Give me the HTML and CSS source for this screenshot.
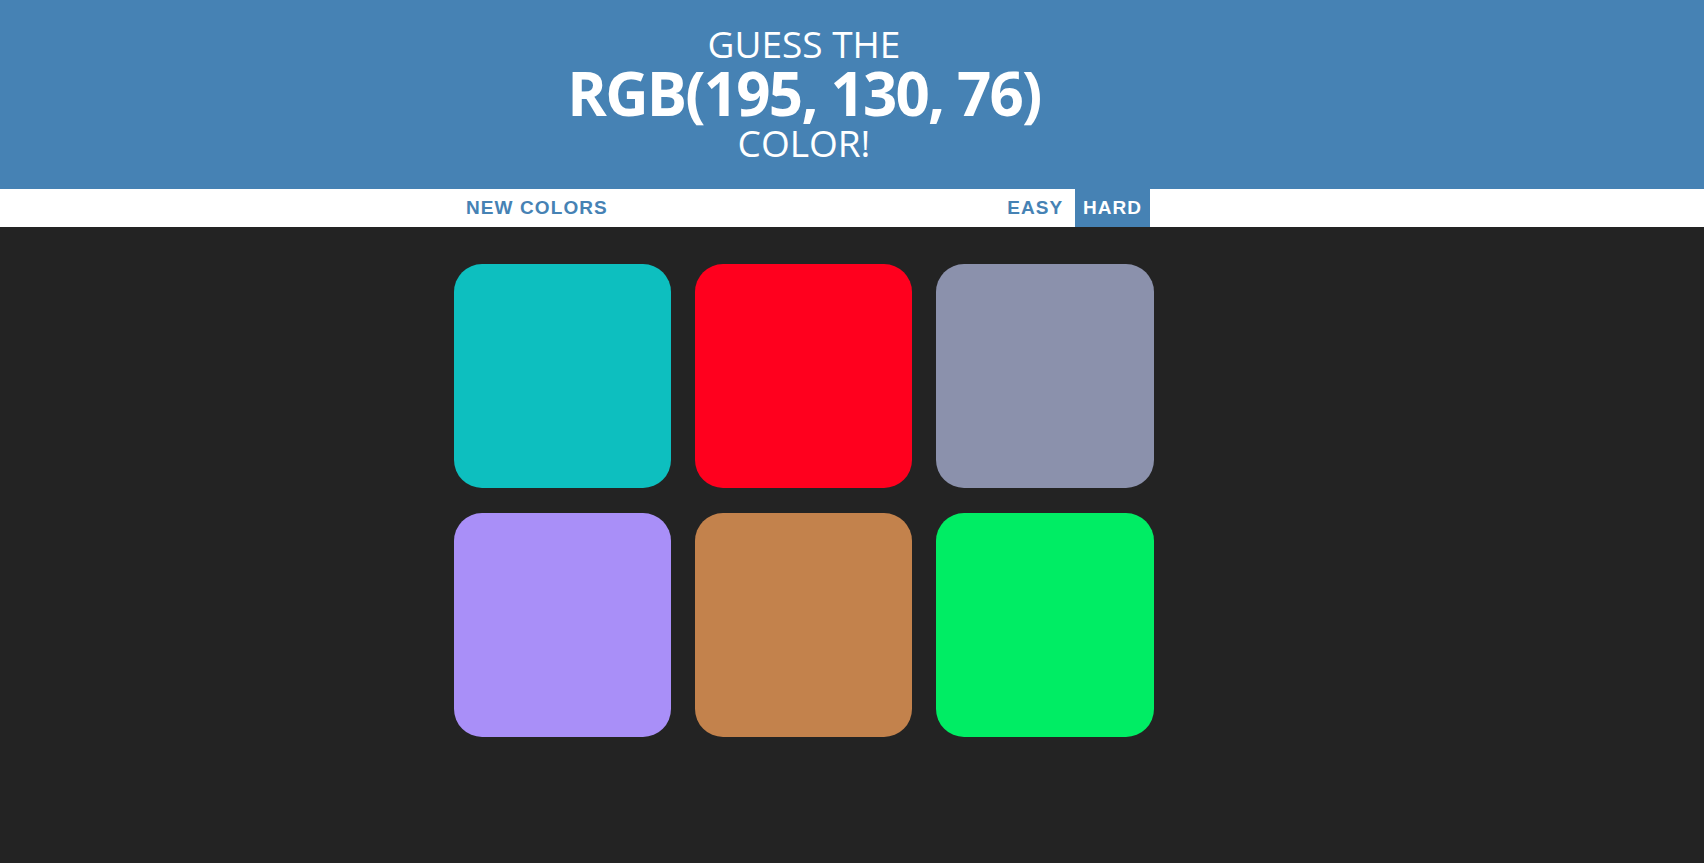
FILE: index.html
```html
<!DOCTYPE html>
<html lang="en">
<head>
<meta charset="utf-8">
<title>Color Game</title>
<link rel="stylesheet" href="styles.css">
</head>
<body>
  <header class="banner">
    <div class="inner">
      <h1 class="title">
        <span class="line line-small">GUESS THE</span>
        <span class="line line-big">RGB(195, 130, 76)</span>
        <span class="line line-last">COLOR!</span>
      </h1>
    </div>
  </header>
  <nav class="stripe">
    <div class="inner">
      <div class="stripe-bar">
        <button class="btn">New Colors</button>
        <span class="message"></span>
        <div class="modes">
          <button class="btn">Easy</button>
          <button class="btn selected">Hard</button>
        </div>
      </div>
    </div>
  </nav>
  <main class="inner">
    <div class="grid">
      <div class="square sq-teal"></div>
      <div class="square sq-red"></div>
      <div class="square sq-grey"></div>
      <div class="square sq-purple"></div>
      <div class="square sq-brown"></div>
      <div class="square sq-green"></div>
    </div>
  </main>
</body>
</html>
```
FILE: styles.css
```css
html, body {
  margin: 0;
  padding: 0;
}
body {
  background: #232323;
  font-family: "Open Sans", "Liberation Sans", sans-serif;
  min-height: 863px;
}
.inner {
  width: 1608px;
}
.banner {
  background: #4682b4;
  color: #ffffff;
  height: 189px;
}
.title {
  margin: 0;
  padding-top: 22px;
  text-align: center;
  font-weight: 400;
}
.line {
  display: block;
}
.line-small {
  font-size: 37px;
  line-height: 44px;
}
.line-big {
  font-size: 60px;
  line-height: 55px;
  font-weight: 700;
  letter-spacing: -1.8px;
}
.line-last {
  font-size: 37px;
  line-height: 43px;
}
.stripe {
  background: #ffffff;
  height: 38px;
}
.stripe-bar {
  width: 692px;
  margin: 0 auto;
  height: 38px;
  display: flex;
  justify-content: space-between;
  align-items: stretch;
}
.modes {
  display: flex;
  gap: 4px;
}
.btn {
  border: none;
  background: none;
  margin: 0;
  padding: 0 8px;
  height: 38px;
  font-family: "Liberation Sans", Arial, sans-serif;
  font-size: 19px;
  font-weight: 700;
  letter-spacing: 1.1px;
  text-transform: uppercase;
  color: #4682b4;
  line-height: 38px;
}
.modes .btn {
  letter-spacing: 1px;
}
.btn.selected {
  background: #4682b4;
  color: #ffffff;
}
.grid {
  width: 700px;
  margin: 37px auto 0;
  display: grid;
  grid-template-columns: 217px 217px 218px;
  grid-auto-rows: 224px;
  column-gap: 24px;
  row-gap: 25px;
}
.square {
  border-radius: 28px;
}
.sq-teal { background: #0dbfbf; }
.sq-red { background: #ff001e; }
.sq-grey { background: #8b91ac; }
.sq-purple { background: #a98ff8; }
.sq-brown { background: #c3824c; }
.sq-green { background: #00ed64; }
```
